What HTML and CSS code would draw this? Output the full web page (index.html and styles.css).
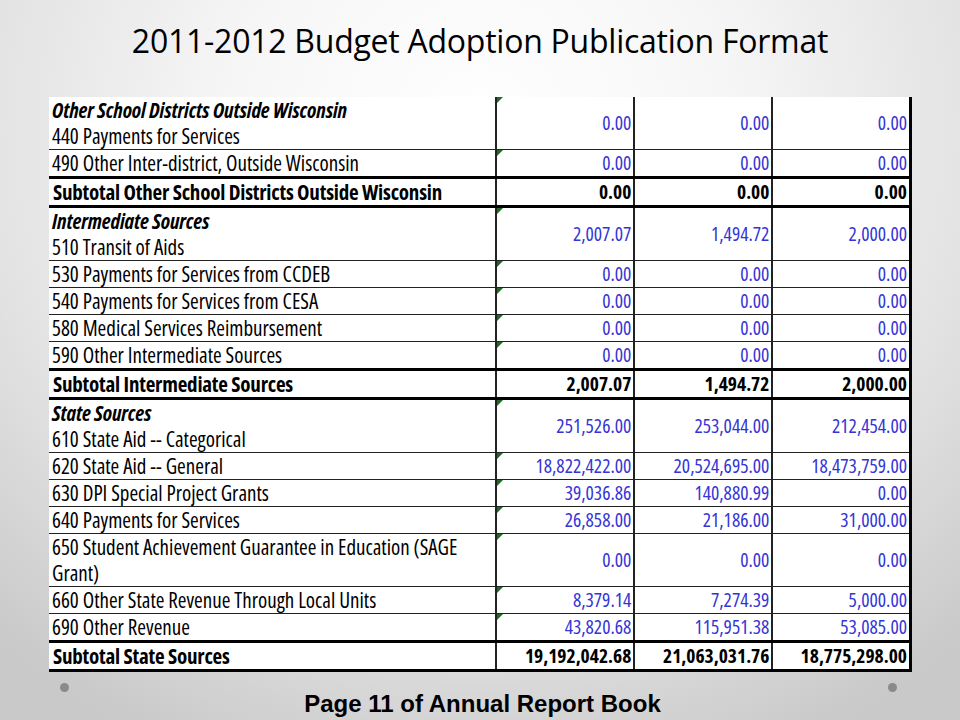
FILE: index.html
```html
<!DOCTYPE html>
<html>
<head>
<meta charset="utf-8">
<link rel="stylesheet" href="styles.css">
</head>
<body>
<div class="slide">
  <h1 class="title">2011-2012 Budget Adoption Publication Format</h1>
  <table class="budget">
    <colgroup>
      <col class="c-label"><col class="c-num"><col class="c-num"><col class="c-num">
    </colgroup>
    <tbody>
      <tr class="dbl first">
        <td class="label"><em class="head">Other School Districts Outside Wisconsin</em><br>440 Payments for Services</td>
        <td class="num flag">0.00</td><td class="num">0.00</td><td class="num">0.00</td>
      </tr>
      <tr class="sgl">
        <td class="label">490 Other Inter-district, Outside Wisconsin</td>
        <td class="num flag">0.00</td><td class="num">0.00</td><td class="num">0.00</td>
      </tr>
      <tr class="sub">
        <td class="label">Subtotal Other School Districts Outside Wisconsin</td>
        <td class="num">0.00</td><td class="num">0.00</td><td class="num">0.00</td>
      </tr>
      <tr class="dbl">
        <td class="label"><em class="head">Intermediate Sources</em><br>510 Transit of Aids</td>
        <td class="num flag">2,007.07</td><td class="num">1,494.72</td><td class="num">2,000.00</td>
      </tr>
      <tr class="sgl">
        <td class="label">530 Payments for Services from CCDEB</td>
        <td class="num flag">0.00</td><td class="num">0.00</td><td class="num">0.00</td>
      </tr>
      <tr class="sgl">
        <td class="label">540 Payments for Services from CESA</td>
        <td class="num flag">0.00</td><td class="num">0.00</td><td class="num">0.00</td>
      </tr>
      <tr class="sgl">
        <td class="label">580 Medical Services Reimbursement</td>
        <td class="num flag">0.00</td><td class="num">0.00</td><td class="num">0.00</td>
      </tr>
      <tr class="sgl">
        <td class="label">590 Other Intermediate Sources</td>
        <td class="num flag">0.00</td><td class="num">0.00</td><td class="num">0.00</td>
      </tr>
      <tr class="sub">
        <td class="label">Subtotal Intermediate Sources</td>
        <td class="num">2,007.07</td><td class="num">1,494.72</td><td class="num">2,000.00</td>
      </tr>
      <tr class="dbl">
        <td class="label"><em class="head">State Sources</em><br>610 State Aid -- Categorical</td>
        <td class="num flag">251,526.00</td><td class="num">253,044.00</td><td class="num">212,454.00</td>
      </tr>
      <tr class="sgl">
        <td class="label">620 State Aid -- General</td>
        <td class="num flag">18,822,422.00</td><td class="num">20,524,695.00</td><td class="num">18,473,759.00</td>
      </tr>
      <tr class="sgl">
        <td class="label">630 DPI Special Project Grants</td>
        <td class="num flag">39,036.86</td><td class="num">140,880.99</td><td class="num">0.00</td>
      </tr>
      <tr class="sgl">
        <td class="label">640 Payments for Services</td>
        <td class="num flag">26,858.00</td><td class="num">21,186.00</td><td class="num">31,000.00</td>
      </tr>
      <tr class="dbl">
        <td class="label">650 Student Achievement Guarantee in Education (SAGE<br>Grant)</td>
        <td class="num flag">0.00</td><td class="num">0.00</td><td class="num">0.00</td>
      </tr>
      <tr class="sgl">
        <td class="label">660 Other State Revenue Through Local Units</td>
        <td class="num flag">8,379.14</td><td class="num">7,274.39</td><td class="num">5,000.00</td>
      </tr>
      <tr class="sgl">
        <td class="label">690 Other Revenue</td>
        <td class="num flag">43,820.68</td><td class="num">115,951.38</td><td class="num">53,085.00</td>
      </tr>
      <tr class="sub last">
        <td class="label">Subtotal State Sources</td>
        <td class="num">19,192,042.68</td><td class="num">21,063,031.76</td><td class="num">18,775,298.00</td>
      </tr>
    </tbody>
  </table>
  <div class="footer">
    <span class="dot"></span>
    <p class="caption">Page 11 of Annual Report Book</p>
    <span class="dot"></span>
  </div>
</div>
</body>
</html>
```
FILE: styles.css
```css
html, body {
  margin: 0;
  padding: 0;
}
body {
  width: 960px;
  height: 720px;
  overflow: hidden;
}
.slide {
  width: 960px;
  height: 720px;
  display: flex;
  flex-direction: column;
  background: radial-gradient(ellipse 75% 95% at 50% 18%, #ffffff 0%, #f6f6f6 35%, #e2e2e2 70%, #c9c9c9 100%);
}
.title {
  margin: 0;
  height: 97px;
  box-sizing: border-box;
  padding-top: 20px;
  text-align: center;
  font-family: "Open Sans", "DejaVu Sans", sans-serif;
  font-weight: 400;
  font-size: 32px;
  line-height: 42px;
  color: #000;
  letter-spacing: -0.25px;
}
.budget {
  margin-left: 49px;
  width: 863px;
  border-collapse: collapse;
  background: #fff;
  table-layout: fixed;
  font-family: "Open Sans", "DejaVu Sans Condensed", sans-serif;
  font-stretch: 75%;
  font-size: 21px;
  color: #000;
}
.c-label { width: 447px; }
.c-num { width: 138px; }
.budget td {
  padding: 0 2px 0 3px;
  border-top: 1px solid #222;
  border-bottom: 1px solid #222;
  border-left: 2px solid #222;
  line-height: 26px;
  vertical-align: middle;
  white-space: nowrap;
  overflow: hidden;
}
.budget td.label {
  border-left: none;
}
.budget td:last-child {
  border-right: 3px solid #000;
}
.budget tr.first td {
  border-top: none;
}
.budget tr.sgl td { height: 26px; }
.budget tr.dbl td { height: 52px; }
.budget tr.sub td {
  height: 24px;
  font-weight: bold;
  border-top: 3px solid #000;
  border-bottom: 3px solid #000;
}
.budget tr.sub td.label {
  padding-left: 4px;
  letter-spacing: -0.2px;
}
.head {
  font-weight: bold;
  letter-spacing: -0.1px;
}
.num {
  text-align: right;
  color: #3434d6;
  position: relative;
  font-size: 19.5px;
}
.sub .num { color: #000; }
.flag::before {
  content: "";
  position: absolute;
  left: 0;
  top: 0;
  width: 0;
  height: 0;
  border-top: 6px solid #1f6b1f;
  border-right: 6px solid transparent;
}
.footer {
  display: flex;
  justify-content: space-between;
  align-items: flex-start;
  padding: 9px 63px 0 60px;
}
.dot {
  width: 9px;
  height: 9px;
  border-radius: 50%;
  background: #8a8a8a;
  margin-top: 2px;
}
.caption {
  margin: 9px 0 0 8px;
  font-family: "Liberation Sans", Arial, sans-serif;
  font-weight: bold;
  font-size: 24px;
  line-height: 28px;
  color: #000;
}
```
